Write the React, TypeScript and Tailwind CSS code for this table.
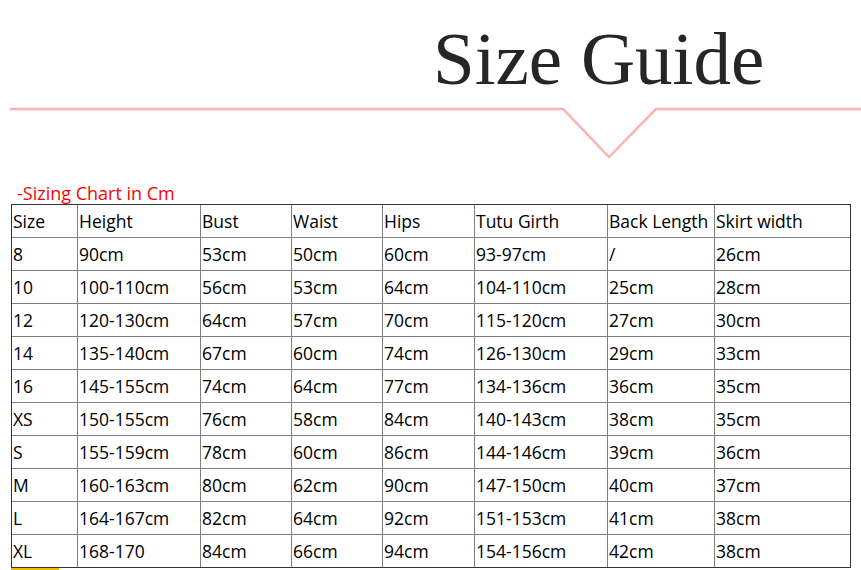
import React from 'react'

const headers = ['Size', 'Height', 'Bust', 'Waist', 'Hips', 'Tutu Girth', 'Back Length', 'Skirt width']

const rows = [
  ['8', '90cm', '53cm', '50cm', '60cm', '93-97cm', '/', '26cm'],
  ['10', '100-110cm', '56cm', '53cm', '64cm', '104-110cm', '25cm', '28cm'],
  ['12', '120-130cm', '64cm', '57cm', '70cm', '115-120cm', '27cm', '30cm'],
  ['14', '135-140cm', '67cm', '60cm', '74cm', '126-130cm', '29cm', '33cm'],
  ['16', '145-155cm', '74cm', '64cm', '77cm', '134-136cm', '36cm', '35cm'],
  ['XS', '150-155cm', '76cm', '58cm', '84cm', '140-143cm', '38cm', '35cm'],
  ['S', '155-159cm', '78cm', '60cm', '86cm', '144-146cm', '39cm', '36cm'],
  ['M', '160-163cm', '80cm', '62cm', '90cm', '147-150cm', '40cm', '37cm'],
  ['L', '164-167cm', '82cm', '64cm', '92cm', '151-153cm', '41cm', '38cm'],
  ['XL', '168-170', '84cm', '66cm', '94cm', '154-156cm', '42cm', '38cm'],
]

export default function App() {
  const all = [headers, ...rows]

  return (
    <div className="w-[861px] h-[570px] bg-white overflow-hidden font-['Open_Sans',sans-serif] text-black">
      {/* Banner */}
      <div className="pt-[22px] pl-[433px]">
        <h1 className="font-['Liberation_Serif',serif] text-[75px] leading-[73px] text-[#262626] whitespace-nowrap">
          Size Guide
        </h1>
      </div>
      <svg width="861" height="70" viewBox="0 0 861 70" className="block">
        <polyline
          points="10,14 563,14 609,62 656,14 861,14"
          fill="none"
          stroke="#ffb0b0"
          strokeWidth="2.5"
        />
      </svg>

      {/* Caption */}
      <div className="pt-[17px] pl-[17px] text-[18px] leading-[22px] text-[#ff0000]">-Sizing Chart in Cm</div>

      {/* Table */}
      <div className="ml-[11px] w-[840px] border border-[#333]">
        {all.map((row, ri) => (
          <div
            key={ri}
            className={`grid grid-cols-[66px_123px_91px_91px_92px_133px_107px_135px] ${
              ri < all.length - 1 ? 'h-[33px] border-b border-[#808080]' : 'h-[32px]'
            }`}
          >
            {row.map((cell, ci) => (
              <div
                key={ci}
                className={`flex items-center pl-[1px] text-[17.5px] whitespace-nowrap ${
                  ci < row.length - 1 ? 'border-r border-[#808080]' : ''
                }`}
              >
                {cell}
              </div>
            ))}
          </div>
        ))}
      </div>
      <div className="ml-[11px] w-[48px] h-[3px] bg-[#f6b800]" />
    </div>
  )
}
